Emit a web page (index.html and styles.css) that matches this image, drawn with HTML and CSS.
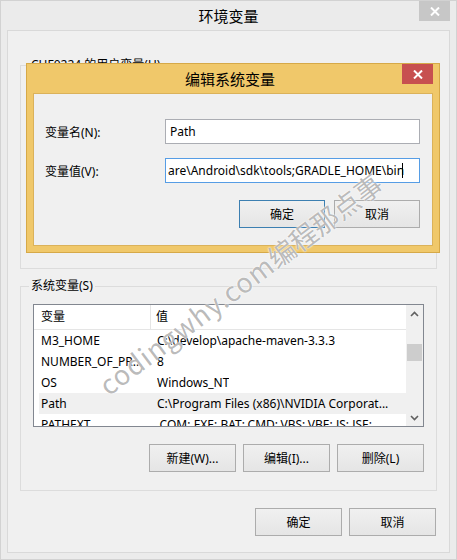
FILE: index.html
```html
<!DOCTYPE html>
<html lang="zh-CN">
<head>
<meta charset="utf-8">
<title>环境变量</title>
<link rel="stylesheet" href="styles.css">
</head>
<body>
<div class="window">
  <div class="titlebar">
    <span></span>
    <span class="title">环境变量</span>
    <div class="close close-gray">
      <svg width="10" height="9" viewBox="0 0 10 9"><path d="M1 0.5 L9 8.5 M9 0.5 L1 8.5" stroke="#fff" stroke-width="2" fill="none"/></svg>
    </div>
  </div>
  <div class="client">
    <div class="group user-group">
      <div class="legend">CHF0224 的用户变量(U)</div>
    </div>
    <div class="group sys-group">
      <div class="legend">系统变量(S)</div>
      <div class="listbox">
        <div class="list-main">
          <div class="list-head">
            <div class="c1">变量</div>
            <div class="c2">值</div>
          </div>
          <div class="row"><div class="c1">M3_HOME</div><div class="c2">C:\develop\apache-maven-3.3.3</div></div>
          <div class="row"><div class="c1">NUMBER_OF_PR...</div><div class="c2">8</div></div>
          <div class="row"><div class="c1">OS</div><div class="c2">Windows_NT</div></div>
          <div class="row selected"><div class="c1">Path</div><div class="c2">C:\Program Files (x86)\NVIDIA Corporat...</div></div>
          <div class="row"><div class="c1">PATHEXT</div><div class="c2">.COM;.EXE;.BAT;.CMD;.VBS;.VBE;.JS;.JSE;...</div></div>
        </div>
        <div class="scrollbar">
          <div class="sb-btn">
            <svg width="9" height="6" viewBox="0 0 9 6"><path d="M1 5 L4.5 1.5 L8 5" stroke="#606060" stroke-width="1.6" fill="none"/></svg>
          </div>
          <div class="sb-track"><div class="sb-thumb"></div></div>
          <div class="sb-btn">
            <svg width="9" height="6" viewBox="0 0 9 6"><path d="M1 1 L4.5 4.5 L8 1" stroke="#606060" stroke-width="1.6" fill="none"/></svg>
          </div>
        </div>
      </div>
      <div class="btn-row">
        <div class="btn">新建(W)...</div>
        <div class="btn">编辑(I)...</div>
        <div class="btn">删除(L)</div>
      </div>
    </div>
    <div class="btn-row bottom-row">
      <div class="btn">确定</div>
      <div class="btn">取消</div>
    </div>
  </div>

  <div class="edit-dialog">
    <div class="edit-titlebar">
      <span></span>
      <span class="title">编辑系统变量</span>
      <div class="close close-red">
        <svg width="10" height="9" viewBox="0 0 10 9"><path d="M1 0.5 L9 8.5 M9 0.5 L1 8.5" stroke="#fff" stroke-width="2" fill="none"/></svg>
      </div>
    </div>
    <div class="edit-client">
      <div class="field">
        <div class="label">变量名(N):</div>
        <div class="input">Path</div>
      </div>
      <div class="field">
        <div class="label">变量值(V):</div>
        <div class="input focused"><span>are\Android\sdk\tools;GRADLE_HOME\bin</span><span class="caret"></span></div>
      </div>
      <div class="btn-row edit-btns">
        <div class="btn default">确定</div>
        <div class="btn">取消</div>
      </div>
    </div>
  </div>

  <div class="watermark"><span class="wm-latin">codingwhy.com</span>编程那点事</div>
</div>
</body>
</html>
```
FILE: styles.css
```css
* { box-sizing: border-box; }
html, body { margin: 0; padding: 0; }
body {
  background: #ebebeb;
  font-family: "Noto Sans", "Noto Sans CJK SC", sans-serif;
  font-size: 12px;
  color: #000;
}
.window {
  position: relative;
  width: 457px;
  height: 560px;
  border: 1px solid #d2d2d2;
  background: #ebebeb;
  display: flex;
  flex-direction: column;
  overflow: hidden;
}
.titlebar {
  height: 29px;
  display: grid;
  grid-template-columns: 1fr auto 1fr;
}
.title {
  font-family: "Noto Sans CJK SC", sans-serif;
  font-size: 15px;
  line-height: 29px;
  color: #000;
}
.close {
  justify-self: end;
  align-self: start;
  width: 31px;
  height: 20px;
  display: flex;
  align-items: center;
  justify-content: center;
}
.close-gray { background: #c7c7c7; margin-right: 6px; }
.close-red { background: #c75050; margin-right: 0; }

.client {
  flex: 1;
  margin: 0 6px 6px 6px;
  border: 1px solid #d9d9d9;
  background: #f0f0f0;
  padding: 0 12px;
  display: flex;
  flex-direction: column;
}
.group {
  border: 1px solid #dcdcdc;
  display: flex;
  flex-direction: column;
  padding: 0 12px;
}
.legend {
  align-self: flex-start;
  height: 16px;
  line-height: 16px;
  margin-top: -9px;
  margin-left: -4px;
  padding: 0 2px;
  background: #f0f0f0;
  white-space: nowrap;
}
.user-group { margin-top: 34px; height: 204px; }
.sys-group { margin-top: 17px; height: 205px; }

.listbox {
  margin-top: 10px;
  height: 123px;
  border: 1px solid #828790;
  background: #fff;
  display: flex;
  overflow: hidden;
}
.list-main { flex: 1; display: flex; flex-direction: column; }
.list-head {
  height: 25px;
  display: flex;
  border-bottom: 1px solid #e5e5e5;
  flex: none;
}
.list-head .c1 {
  width: 117px;
  padding-left: 7px;
  line-height: 24px;
  border-right: 1px solid #e5e5e5;
}
.list-head .c2 { padding-left: 5px; line-height: 24px; }
.row {
  height: 21px;
  flex: none;
  display: flex;
  margin-left: 5px;
  line-height: 21px;
  white-space: nowrap;
}
.row .c1 { width: 118px; padding-left: 2px; overflow: hidden; }
.row .c2 { padding-left: 0; overflow: hidden; }
.row.selected { background: #f0f0f0; }

.scrollbar {
  width: 17px;
  background: #f0f0f0;
  display: flex;
  flex-direction: column;
  flex: none;
}
.sb-btn {
  height: 17px;
  display: flex;
  align-items: center;
  justify-content: center;
  flex: none;
}
.sb-track { flex: 1; padding-top: 22px; }
.sb-thumb { height: 17px; margin: 0 1px; background: #cdcdcd; }

.btn-row {
  display: flex;
  justify-content: flex-end;
  gap: 7px;
  margin-top: 17px;
}
.btn {
  width: 87px;
  height: 28px;
  border: 1px solid #acacac;
  background: linear-gradient(#f0f0f0, #e5e5e5);
  display: flex;
  align-items: center;
  justify-content: center;
  white-space: nowrap;
}
.bottom-row { margin-top: 17px; margin-right: 1px; }

.edit-dialog {
  position: absolute;
  left: 25px;
  top: 62px;
  width: 414px;
  height: 190px;
  border: 1px solid #d6a948;
  background: #f0c86a;
  display: flex;
  flex-direction: column;
}
.edit-titlebar {
  height: 29px;
  display: grid;
  grid-template-columns: 1fr auto 1fr;
  padding-right: 6px;
}
.edit-client {
  flex: 1;
  margin: 0 6px 6px 6px;
  border: 1px solid #dbb25a;
  background: #f0f0f0;
  padding: 25px 12px 0 11px;
  display: flex;
  flex-direction: column;
}
.field {
  display: flex;
  align-items: center;
  height: 25px;
  margin-bottom: 14px;
}
.label { width: 120px; flex: none; }
.input {
  width: 255px;
  height: 25px;
  border: 1px solid #abadb3;
  background: #fff;
  padding-left: 4px;
  line-height: 23px;
  white-space: nowrap;
  overflow: hidden;
  display: flex;
  align-items: center;
}
.input.focused { border-color: #569de5; padding-left: 2px; }
.caret {
  display: inline-block;
  width: 1px;
  height: 15px;
  background: #000;
  margin-left: -2px;
}
.edit-btns { margin-top: 3px; gap: 9px; }
.edit-btns .btn { width: 86px; }
.btn.default { border-color: #3c7fb1; }

.watermark {
  position: absolute;
  left: 92px;
  top: 375px;
  transform-origin: 0 0;
  transform: rotate(-37deg);
  font-family: "Noto Sans CJK SC", sans-serif;
  font-size: 27px;
  line-height: 30px;
  white-space: nowrap;
  color: rgba(100, 100, 100, 0.45);
  text-shadow: 0 0 1px #fff, 0 0 2px #fff;
  pointer-events: none;
}
.wm-latin { letter-spacing: 1px; }
```
